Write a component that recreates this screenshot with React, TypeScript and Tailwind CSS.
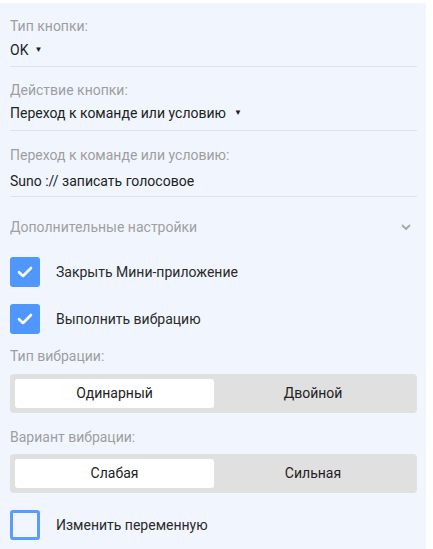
import React from 'react';

function Check({ checked, label }: { checked: boolean; label: string }) {
    return (
        <div className="flex items-center h-[30px]">
            {checked ? (
                <div className="w-[30px] h-[30px] rounded-[3px] bg-[#4f97fd] flex items-center justify-center">
                    <svg width="16" height="12" viewBox="0 0 16 12" fill="none">
                        <path d="M2 6.2L6 10L14 2" stroke="white" strokeWidth="2.6" strokeLinecap="round" strokeLinejoin="round" />
                    </svg>
                </div>
            ) : (
                <div className="w-[30px] h-[30px] rounded-[3px] border-[3px] border-[#5a9cfd]" />
            )}
            <span className="ml-[16px] text-[14px] text-[#2a2a2a]">{label}</span>
        </div>
    );
}

function Segmented({ left, right }: { left: string; right: string }) {
    return (
        <div className="h-[39px] bg-[#e0e0e0] rounded-[4px] p-[5px] flex">
            <div className="w-[199px] bg-white rounded-[3px] flex items-center justify-center text-[14px] text-[#222]">{left}</div>
            <div className="flex-1 flex items-center justify-center text-[14px] text-[#222]">{right}</div>
        </div>
    );
}

export default function App() {
    return (
        <div className="w-[433px] h-[549px] bg-white pt-[3px]" style={{ fontFamily: 'Roboto, "Noto Sans", sans-serif' }}>
            <div className="w-[426px] h-[546px] bg-[#f1f6fe] pl-[10px] pr-[9px]">
                <div className="h-[64px] border-b border-[#dde3ec] flex flex-col">
                    <p className="mt-[14px] text-[14px] leading-[18px] text-[#9e9e9e]">Тип кнопки:</p>
                    <p className="mt-[6px] text-[14px] leading-[18px] text-[#222] flex items-center">
                        OK <span className="ml-[6px] text-[8px]">▼</span>
                    </p>
                </div>
                <div className="h-[64px] border-b border-[#dde3ec] flex flex-col">
                    <p className="mt-[14px] text-[14px] leading-[18px] text-[#9e9e9e]">Действие кнопки:</p>
                    <p className="mt-[5px] text-[14px] leading-[18px] text-[#222] flex items-center">
                        Переход к команде или условию <span className="ml-[8px] text-[8px]">▼</span>
                    </p>
                </div>
                <div className="h-[66px] border-b border-[#dde3ec] flex flex-col">
                    <p className="mt-[15px] text-[14px] leading-[18px] text-[#9e9e9e]">Переход к команде или условию:</p>
                    <p className="mt-[8px] text-[14px] leading-[18px] text-[#222]">Suno :// записать голосовое</p>
                </div>
                <div className="h-[60px] flex items-center justify-between pr-[6px]">
                    <span className="text-[14px] text-[#a0a0a0]">Дополнительные настройки</span>
                    <svg width="10" height="7" viewBox="0 0 10 7" fill="none">
                        <path d="M1.5 1.5L5 5L8.5 1.5" stroke="#a8a8a8" strokeWidth="1.8" strokeLinecap="round" strokeLinejoin="round" />
                    </svg>
                </div>
                <Check checked label="Закрыть Мини-приложение" />
                <div className="h-[17px]" />
                <Check checked label="Выполнить вибрацию" />
                <p className="mt-[13px] text-[14px] leading-[18px] text-[#9e9e9e]">Тип вибрации:</p>
                <div className="mt-[9px]">
                    <Segmented left="Одинарный" right="Двойной" />
                </div>
                <p className="mt-[15px] text-[14px] leading-[18px] text-[#9e9e9e]">Вариант вибрации:</p>
                <div className="mt-[8px]">
                    <Segmented left="Слабая" right="Сильная" />
                </div>
                <div className="mt-[17px]">
                    <Check checked={false} label="Изменить переменную" />
                </div>
            </div>
        </div>
    );
}
